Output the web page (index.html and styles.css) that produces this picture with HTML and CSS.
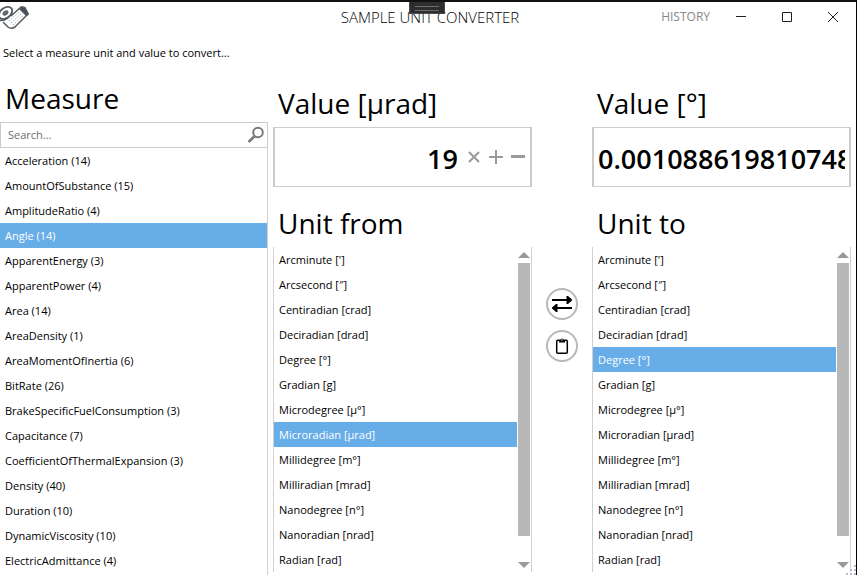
FILE: index.html
```html
<!DOCTYPE html>
<html lang="en">
<head>
<meta charset="utf-8">
<title>Sample Unit Converter</title>
<link rel="stylesheet" href="styles.css">
</head>
<body>
<div class="window">
  <div class="dock-handle"></div>
  <header class="titlebar">
    <svg class="logo" width="30" height="26" viewBox="0 0 30 26" fill="none" stroke="#555b63" stroke-width="1.5">
      <path d="M3 17 L8 22 Q11 24.500 15 22 L28 9 L21 2 L11 11" fill="#fff"/>
      <path d="M19.500 4 L22.500 1 L24 2.500 L25 2 L28.500 9 L26.500 11 Z" fill="#4a4f57" stroke-width="1"/>
      <ellipse cx="5.500" cy="8" rx="7.500" ry="5" transform="rotate(-38 5.500 8)" fill="#fff" stroke-width="1.800"/>
      <ellipse cx="5.500" cy="8" rx="2.500" ry="1.500" transform="rotate(-38 5.500 8)" fill="#777d85"/>
      <path d="M0 15.500 Q8 16 12.500 7"/>
      <path d="M9 16 L20 6 M11 18 L22 8 M13 20 L24 10" stroke="#8b9097" stroke-width="1" stroke-dasharray="1 2"/>
    </svg>
    <h1 class="title">SAMPLE UNIT CONVERTER</h1>
    <nav class="commands">
      <button class="history">HISTORY</button>
      <button class="win-button" aria-label="Minimize"><svg width="12" height="12" viewBox="0 0 12 12"><path d="M1 5.500H11" stroke="#222"/></svg></button>
      <button class="win-button" aria-label="Maximize"><svg width="12" height="12" viewBox="0 0 12 12"><path d="M1.500 1.500H10.500V10.500H1.500Z" fill="none" stroke="#222"/></svg></button>
      <button class="win-button" aria-label="Close"><svg width="12" height="12" viewBox="0 0 12 12"><path d="M1 1L11 11M11 1L1 11" stroke="#222"/></svg></button>
    </nav>
  </header>
  <p class="intro">Select a measure unit and value to convert...</p>
  <main class="converter">
    <section class="measure">
      <h2 class="heading">Measure</h2>
      <div class="search">
        <input class="search-input" type="text" placeholder="Search..." aria-label="Search measures">
        <button class="search-button" aria-label="Search"><svg width="18" height="18" viewBox="0 0 18 18" fill="none" stroke="#7a7a7a"><circle cx="11" cy="6.500" r="4.800" stroke-width="2"/><path d="M7.500 10.200L1.500 16" stroke-width="2.600"/></svg></button>
      </div>
      <ul class="list measures">
        <li><button class="item">Acceleration (14)</button></li>
        <li><button class="item">AmountOfSubstance (15)</button></li>
        <li><button class="item">AmplitudeRatio (4)</button></li>
        <li><button class="item selected">Angle (14)</button></li>
        <li><button class="item">ApparentEnergy (3)</button></li>
        <li><button class="item">ApparentPower (4)</button></li>
        <li><button class="item">Area (14)</button></li>
        <li><button class="item">AreaDensity (1)</button></li>
        <li><button class="item">AreaMomentOfInertia (6)</button></li>
        <li><button class="item">BitRate (26)</button></li>
        <li><button class="item">BrakeSpecificFuelConsumption (3)</button></li>
        <li><button class="item">Capacitance (7)</button></li>
        <li><button class="item">CoefficientOfThermalExpansion (3)</button></li>
        <li><button class="item">Density (40)</button></li>
        <li><button class="item">Duration (10)</button></li>
        <li><button class="item">DynamicViscosity (10)</button></li>
        <li><button class="item">ElectricAdmittance (4)</button></li>
      </ul>
    </section>
    <section class="unit">
      <h2 class="heading"><label for="from-value">Value [µrad]</label></h2>
      <div class="value-box">
        <input class="value" id="from-value" type="text" value="19">
        <div class="spin">
          <button class="spin-button" aria-label="Clear"><svg width="16" height="16" viewBox="0 0 16 16"><path d="M3 3L13 13M13 3L3 13" stroke="#999" stroke-width="2"/></svg></button>
          <button class="spin-button" aria-label="Increase"><svg width="16" height="16" viewBox="0 0 16 16"><path d="M1 8H15M8 1V15" stroke="#999" stroke-width="2"/></svg></button>
          <button class="spin-button" aria-label="Decrease"><svg width="16" height="16" viewBox="0 0 16 16"><path d="M1 7.500H15" stroke="#999" stroke-width="3"/></svg></button>
        </div>
      </div>
      <h2 class="heading second">Unit from</h2>
      <div class="list-box">
        <ul class="list">
          <li><button class="item">Arcminute [']</button></li>
          <li><button class="item">Arcsecond [″]</button></li>
          <li><button class="item">Centiradian [crad]</button></li>
          <li><button class="item">Deciradian [drad]</button></li>
          <li><button class="item">Degree [°]</button></li>
          <li><button class="item">Gradian [g]</button></li>
          <li><button class="item">Microdegree [µ°]</button></li>
          <li><button class="item selected">Microradian [µrad]</button></li>
          <li><button class="item">Millidegree [m°]</button></li>
          <li><button class="item">Milliradian [mrad]</button></li>
          <li><button class="item">Nanodegree [n°]</button></li>
          <li><button class="item">Nanoradian [nrad]</button></li>
          <li><button class="item">Radian [rad]</button></li>
        </ul>
        <div class="scrollbar"><i class="arrow up"></i><i class="thumb"></i><i class="arrow down"></i></div>
      </div>
    </section>
    <div class="actions">
      <button class="round" aria-label="Swap units"><svg width="20" height="16" viewBox="0 0 20 16"><path d="M0 4H16M4 12H20" stroke="#000" stroke-width="2"/><path d="M14.500 0H16L20 3.500V4.500L16 8H14.500ZM5.500 8H4L0 11.500V12.500L4 16H5.500Z"/></svg></button>
      <button class="round" aria-label="Copy result"><svg width="14" height="18" viewBox="0 0 14 18"><rect x="1.700" y="3.200" width="10.600" height="13" rx="1" fill="none" stroke="#000" stroke-width="1.500"/><path d="M4 3H5.500A1.500 1.500 0 0 1 8.500 3H10V5.500H4Z"/><circle cx="7" cy="3" r=".7" fill="#fff"/></svg></button>
    </div>
    <section class="unit">
      <h2 class="heading"><label for="to-value">Value [°]</label></h2>
      <div class="value-box">
        <input class="value result" id="to-value" type="text" value="0.00108861981074806" readonly>
      </div>
      <h2 class="heading second">Unit to</h2>
      <div class="list-box">
        <ul class="list">
          <li><button class="item">Arcminute [']</button></li>
          <li><button class="item">Arcsecond [″]</button></li>
          <li><button class="item">Centiradian [crad]</button></li>
          <li><button class="item">Deciradian [drad]</button></li>
          <li><button class="item selected">Degree [°]</button></li>
          <li><button class="item">Gradian [g]</button></li>
          <li><button class="item">Microdegree [µ°]</button></li>
          <li><button class="item">Microradian [µrad]</button></li>
          <li><button class="item">Millidegree [m°]</button></li>
          <li><button class="item">Milliradian [mrad]</button></li>
          <li><button class="item">Nanodegree [n°]</button></li>
          <li><button class="item">Nanoradian [nrad]</button></li>
          <li><button class="item">Radian [rad]</button></li>
        </ul>
        <div class="scrollbar"><i class="arrow up"></i><i class="thumb"></i><i class="arrow down"></i></div>
      </div>
    </section>
  </main>
  <svg class="grip" width="10" height="10" viewBox="0 0 10 10" fill="#b4bccf"><path d="M8 0h2v2h-2zM8 4h2v2h-2zM4 4h2v2h-2zM8 8h2v2h-2zM4 8h2v2h-2zM0 8h2v2h-2z"/></svg>
</div>
</body>
</html>
```
FILE: styles.css
```css
* { box-sizing: border-box; }
body {
  margin: 0;
  background: #fff;
  color: #000;
  font: 11px/16px "Open Sans", "Noto Sans", sans-serif;
}
button, input {
  margin: 0;
  padding: 0;
  border: 0;
  background: none;
  color: inherit;
  font: inherit;
}
h1, h2, p, ul { margin: 0; padding: 0; font-weight: 400; }
ul { list-style: none; }
svg { display: block; }

.window {
  position: relative;
  display: flex;
  flex-direction: column;
  height: 100vh;
  overflow: hidden;
  border-top: 2px solid #111;
  border-right: 1px solid #000;
}
.dock-handle {
  position: absolute;
  top: -1px;
  left: 50%;
  width: 36px;
  height: 13px;
  margin-left: -19px;
  padding: 4px 5px;
  border: 1px solid #4a4a50;
  background: #2d2d30;
}
.dock-handle::before {
  content: "";
  display: block;
  height: 3px;
  border: solid #6d6d70;
  border-width: 1px 0;
}
.titlebar {
  flex: none;
  display: grid;
  grid-template-columns: 1fr auto 1fr;
  align-items: center;
  height: 30px;
}
.logo { align-self: start; margin-top: 3px; }
.title {
  padding-left: 4px;
  font-size: 15px;
  line-height: 20px;
  font-weight: 300;
}
.commands {
  display: flex;
  justify-content: flex-end;
  align-items: center;
}
.history {
  margin-right: 8px;
  color: #888;
  font-size: 12px;
}
.win-button {
  display: grid;
  place-items: center;
  width: 46px;
  height: 30px;
}
.intro { flex: none; padding: 13px 3px 12px; }

.converter {
  flex: 1;
  min-height: 0;
  display: grid;
  grid-template-columns: 273px minmax(0, 1fr) 60px minmax(0, 1fr);
  grid-template-rows: minmax(0, 1fr);
  padding-right: 5px;
}
.heading {
  flex: none;
  padding: 0 0 2px 5px;
  font-size: 28px;
  line-height: 44px;
}
.second { margin-top: 14px; }
.measure {
  display: flex;
  flex-direction: column;
  min-height: 0;
  margin-right: 5px;
  padding-top: 3px;
  overflow: hidden;
}
.search {
  flex: none;
  display: flex;
  align-items: center;
  height: 26px;
  border: 1px solid #ccc;
}
.search-input {
  flex: 1;
  min-width: 0;
  padding-left: 7px;
}
.search-input::placeholder { color: #6d6d6d; }
.search-button { margin-right: 2px; }
.list { flex: 1; min-width: 0; overflow: hidden; }
.measures { border-right: 1px solid #d0d0d0; }
.item {
  display: block;
  width: 100%;
  height: 25px;
  padding: 0 5px;
  text-align: left;
  white-space: nowrap;
}
.selected {
  background: #67ade8;
  color: #fff;
}

.unit {
  display: flex;
  flex-direction: column;
  min-height: 0;
  padding: 8px 0 3px;
}
.value-box {
  flex: none;
  display: flex;
  align-items: center;
  height: 60px;
  padding: 0 4px;
  border: solid #ccc;
  border-width: 1px 2px;
}
.value {
  flex: 1;
  min-width: 0;
  height: 40px;
  padding-top: 2px;
  font-size: 27px;
  font-weight: 600;
  text-align: right;
}
.result { text-align: left; }
.spin { display: flex; gap: 6px; margin-left: 8px; }
.list-box {
  flex: 1;
  min-height: 0;
  display: flex;
  border: solid #d0d0d0;
  border-width: 0 1px;
}
.scrollbar {
  flex: none;
  display: flex;
  flex-direction: column;
  align-items: center;
  width: 14px;
  padding: 5px 1px 4px;
}
.arrow {
  border: solid transparent;
  border-width: 0 6px;
}
.up { border-bottom: 6px solid #999; margin-bottom: 5px; }
.down { border-top: 6px solid #999; margin-top: 26px; }
.thumb { flex: 1; width: 12px; background: #b8b8b8; }

.actions {
  display: flex;
  flex-direction: column;
  align-items: center;
  gap: 10px;
  padding-top: 215px;
}
.round {
  display: grid;
  place-items: center;
  width: 32px;
  height: 32px;
  border: 2px solid #b8b8b8;
  border-radius: 50%;
}
.grip { position: absolute; right: 0; bottom: 0; }
```
